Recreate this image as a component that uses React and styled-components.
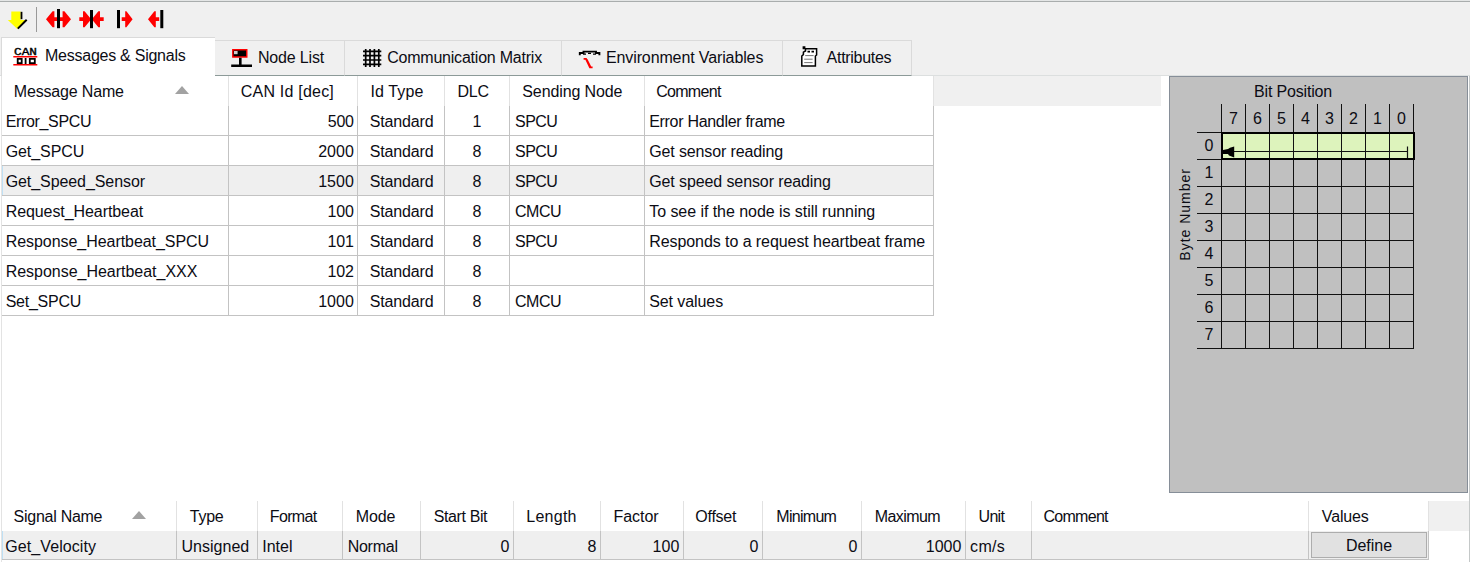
import React from "react";
import styled, { createGlobalStyle } from "styled-components";

const GlobalStyle = createGlobalStyle`
  *, *::before, *::after { box-sizing: border-box; }
  body { margin: 0; background: #fff; overflow: hidden; }
`;

const Window = styled.div`
  display: flex;
  flex-direction: column;
  width: 1470px;
  height: 562px;
  background: #fff;
  color: #0c0c14;
  font: 16px/1 "Liberation Sans", Arial, sans-serif;
  white-space: pre;
  overflow: hidden;
`;

const Label = styled.span`
  letter-spacing: ${(p) => p.$track || 0}px;
`;

/* ---------- toolbar ---------- */

const Toolbar = styled.div`
  display: flex;
  align-items: flex-start;
  flex: none;
  height: 37px;
  border-top: 1px solid #e4e6e6;
  background: #f0f0f0;
  box-shadow: inset 0 1px 0 #a9adad;
`;

const ToolGroup = styled.div`
  display: flex;
  padding: 6px 0 0 ${(p) => p.$left}px;
`;

const Divider = styled.div`
  width: 1px;
  height: 25px;
  margin: 6px 0 0 9px;
  background: #999;
`;

const Svg = styled.svg`
  display: block;
  flex: none;
  overflow: visible;
`;

const ApplyIcon = () => (
  <Svg width="20" height="25" viewBox="7 7 20 25">
    <path fill="#ff0" d="M11.3 11.5H20.6V20H26L17.3 29L7.8 20H11.3Z" />
    <path fill="#000" d="M20.6 11.8H22.4V19.2H20.6Z" />
    <path stroke="#000" strokeWidth="2" d="M17.8 28.6L26.7 19.8" />
  </Svg>
);

const SpreadIcon = () => (
  <Svg width="25" height="25" viewBox="46 7 25 25">
    <path fill="#f00" d="M46 19.2L52.6 11.2H54.4V17.3H62.6V11.2H64.4L71 19.2L64.4 27.3H62.6V21H54.4V27.3H52.6Z" />
    <path fill="#000" d="M57 9H60V28.2H57Z" />
  </Svg>
);

const CollapseIcon = () => (
  <Svg width="25" height="25" viewBox="79 7 25 25">
    <path fill="#f00" d="M79.3 17.3H83V11.2H84.6L91.2 19.2L84.6 27.3H83V21H79.3Z" />
    <path fill="#f00" d="M103.7 17.3H100V11.2H98.4L91.8 19.2L98.4 27.3H100V21H103.7Z" />
    <path fill="#000" d="M90 10H93V28.2H90Z" />
  </Svg>
);

const ExpandRightIcon = () => (
  <Svg width="16" height="25" viewBox="117 7 16 25">
    <path fill="#000" d="M117 10H120V28.2H117Z" />
    <path fill="#f00" d="M121.7 17.3H125.2V11.2H126.4L132.6 19.2L126.4 27.3H125.2V21H121.7Z" />
  </Svg>
);

const ExpandLeftIcon = () => (
  <Svg width="16" height="25" viewBox="148 7 16 25">
    <path fill="#000" d="M160.3 10H163.3V28.2H160.3Z" />
    <path fill="#f00" d="M159.2 17.3H155.8V11.2H154.4L148 19.2L154.4 27.3H155.8V21H159.2Z" />
  </Svg>
);

/* ---------- tabs ---------- */

const TabStrip = styled.div`
  display: flex;
  align-items: flex-end;
  flex: none;
  height: 39px;
  padding-left: 1px;
  background: linear-gradient(#dcdfdf, #dcdfdf) left bottom / 100% 1px no-repeat #f0f0f0;
`;

const Tab = styled.div`
  display: flex;
  align-items: flex-start;
  width: ${(p) => p.$w}px;
  height: ${(p) => (p.$active ? 39 : 36)}px;
  padding-left: ${(p) => p.$pad}px;
  background: ${(p) => (p.$active ? "#fff" : "#f0f0f0")};
  border: solid #dadada;
  border-width: 1px ${(p) => (p.$active ? 0 : 1)}px 0 ${(p) => (p.$active ? 1 : 0)}px;
  border-bottom: ${(p) => (p.$active ? "none" : "1px solid #8c9a98")};
`;

const TabIcon = styled.div`
  display: flex;
  height: 34px;
  align-items: center;
`;

const TabText = styled(Label)`
  margin-left: ${(p) => p.$gap}px;
  line-height: ${(p) => p.$line || 34}px;
`;

const CanText = styled.text`
  font: 10px "Liberation Mono", monospace;
`;

const CanIcon = () => (
  <Svg width="24" height="34" viewBox="13 38 24 34">
    <CanText x="14" y="55" textLength="23" lengthAdjust="spacingAndGlyphs" fill="#000" stroke="#000" strokeWidth=".35">CAN</CanText>
    <path fill="#f00" d="M13.3 56H37.3V57.4H13.3ZM13.3 64H37.3V65.4H13.3Z" />
    <path fill="none" stroke="#000" strokeWidth="1.8" d="M17.7 58.9H21.7V63.1H17.7ZM29.8 58.9H34.8V63.1H29.8ZM25.6 58V64" />
  </Svg>
);

const NodeIcon = () => (
  <Svg width="22" height="34" viewBox="231 41 22 34">
    <path fill="#000" stroke="#f00" strokeWidth="1.4" d="M232.8 49.8H246.8V57H232.8Z" />
    <path fill="#ccc" d="M234 51H237.6V54.2H234Z" />
    <path fill="#000" d="M239 57.8H241.6V65H239ZM231.2 64.4H252V66.9H231.2Z" />
  </Svg>
);

const MatrixIcon = () => (
  <Svg width="19" height="34" viewBox="363 41 19 34">
    <path stroke="#000" strokeWidth="1.7" d="M365.7 49V67M370 49V67M374.4 49V67M378.8 49V67M363 51.3H381.3M363 55.6H381.3M363 60H381.3M363 64.4H381.3" />
  </Svg>
);

const GaugeIcon = () => (
  <Svg width="22" height="34" viewBox="579 41 22 34">
    <path fill="none" stroke="#000" strokeWidth="1.9" d="M579.8 55.2V53H583.5V51.6H596V53H599.4V55.2" />
    <path stroke="#000" strokeWidth="1.2" d="M583 54.2H586M593 54.2H596M588 53.4H591" />
    <path fill="none" stroke="#f00" strokeWidth="1.9" d="M583.6 58.9H586L590 67.4H592.6M586.6 59.5L590.6 67.4" />
  </Svg>
);

const AttributeIcon = () => (
  <Svg width="18" height="34" viewBox="801 41 18 34">
    <path fill="#fff" stroke="#000" strokeWidth="1.5" d="M805.5 51V48.8H816.6V55L815.4 56V66H801.8V56L803.4 54.6V52.2Z" />
    <path fill="#000" d="M802.6 46.3H805.4V49.2H802.6ZM807.5 50.8H810V52.6H807.5ZM811.5 50.8H814V52.6H811.5Z" />
    <path stroke="#777" strokeWidth="1" d="M805.2 55.6H813.6M804.2 59.2H812.6M804.2 62.6H812.6" />
  </Svg>
);

/* ---------- tables ---------- */

const Workspace = styled.div`
  display: flex;
  flex: none;
  height: 425px;
  padding-left: 1px;
  border-right: 1px solid #c4c8c8;
`;

const TablePane = styled.div`
  flex: 1;
  border-left: 1px solid #e3e3e3;
`;

const HeaderRow = styled.div`
  display: flex;
  height: 30px;
`;

const HeaderCell = styled.div`
  display: flex;
  flex: none;
  width: ${(p) => p.$w}px;
  padding: 1px 0 0 ${(p) => p.$pad + 0.8}px;
  line-height: 29px;
  border-right: 1px solid #e2e2e2;
`;

const HeaderFill = styled.div`
  width: ${(p) => p.$w}px;
  background: #f0f0f0;
`;

const SortMark = styled.i`
  width: 0;
  height: 0;
  margin: 9px 0 0 ${(p) => p.$gap}px;
  border: solid transparent;
  border-width: 0 7px 8px;
  border-bottom-color: #a2a2a2;
`;

const Row = styled.div`
  display: flex;
  width: ${(p) => p.$w}px;
  height: ${(p) => p.$h || 30}px;
  background: ${(p) => (p.$active ? "#efefef" : "#fff")};
  box-shadow: ${(p) => (p.$active ? "inset 1px 0 0 #bfe0f4" : "none")};
`;

const Cell = styled.div`
  flex: none;
  width: ${(p) => p.$w}px;
  padding: 1px ${(p) => (p.$align === "right" ? p.$pad + 0.7 : 0)}px 0
    ${(p) => (p.$align ? 0 : p.$pad + 0.7)}px;
  line-height: 29px;
  text-align: ${(p) => p.$align || "left"};
  border: solid #c3c3c3;
  border-width: 0 1px 1px 0;
`;

const ActionCell = styled(Cell)`
  padding: 1px 0 0 2px;
`;

const DefineButton = styled.button`
  display: block;
  width: 116px;
  height: 26px;
  margin: 0;
  padding: 0;
  border: 1px solid #adadad;
  background: #e1e1e1;
  color: inherit;
  font: inherit;
  line-height: 23px;
  text-align: center;
`;

/* ---------- bit layout panel ---------- */

const Panel = styled.div`
  flex: none;
  width: 299px;
  height: 417px;
  margin-right: 1px;
  border: 1px solid #868e98;
  background: #c0c0c0;
`;

const PanelTitle = styled.div`
  height: 27px;
  padding: 1px 0 0 84px;
  line-height: 27px;
`;

const PanelBody = styled.div`
  display: flex;
`;

const AxisName = styled.div`
  width: 27px;
  padding: 64px 0 0 6px;
  font-size: 14px;
  line-height: 18px;
  letter-spacing: 1px;
  writing-mode: sideways-lr;
  text-align: right;
`;

const BitTable = styled.div`
  position: relative;
  display: grid;
  grid-template-columns: 25px repeat(8, 24px);
  grid-template-rows: 29px repeat(8, 27px);
`;

const BitCell = styled.div`
  border: solid #111;
  border-width: 0 1px 1px 0;
  background: ${(p) => (p.$used ? "#ddf3bc" : "transparent")};
  text-align: center;
  line-height: ${(p) => (p.$head ? 29 : 26)}px;
`;

const SignalFrame = styled.div`
  position: absolute;
  left: 24px;
  top: 28px;
  width: 194px;
  height: 28px;
  border: 2px solid #000;
`;

const SignalArrow = () => (
  <Svg width="190" height="24" viewBox="1223 134 190 24">
    <path stroke="#111" strokeWidth="1.2" d="M1224 151.5H1407.5M1407.5 146.5V158" />
    <path fill="#000" d="M1223 150L1228 149L1230 147.8L1234.2 146.4V157.6L1229 155.5L1228 154H1223Z" />
  </Svg>
);

/* ---------- data ---------- */

const messageColumns = [
  { title: "Message Name", w: 227, head: 11, pad: 3, track: -0.17, sort: 51 },
  { title: "CAN Id [dec]", w: 129, head: 11, pad: 2.5, align: "right", track: 0.21 },
  { title: "Id Type", w: 87, head: 11.7, pad: 11, track: 0.12 },
  { title: "DLC", w: 65, head: 11.7, align: "center", track: -0.23 },
  { title: "Sending Node", w: 135, head: 11.5, pad: 4.3, track: -0.11 },
  { title: "Comment", w: 289, head: 10.4, pad: 3.5, track: -0.7 },
];

const messages = [
  [["Error_SPCU", -0.34], ["500", -0.2], ["Standard", -0.15], ["1"], ["SPCU", -0.53], ["Error Handler frame", -0.3]],
  [["Get_SPCU", -0.08], ["2000"], ["Standard", -0.15], ["8"], ["SPCU", -0.53], ["Get sensor reading", -0.13]],
  [["Get_Speed_Sensor", -0.08], ["1500"], ["Standard", -0.15], ["8"], ["SPCU", -0.53], ["Get speed sensor reading", -0.1]],
  [["Request_Heartbeat", -0.08], ["100", -0.1], ["Standard", -0.15], ["8"], ["CMCU", -0.48], ["To see if the node is still running", -0.05]],
  [["Response_Heartbeat_SPCU", -0.05], ["101", -0.1], ["Standard", -0.15], ["8"], ["SPCU", -0.53], ["Responds to a request heartbeat frame", -0.07]],
  [["Response_Heartbeat_XXX", -0.02], ["102", -0.1], ["Standard", -0.15], ["8"], [""], [""]],
  [["Set_SPCU", -0.26], ["1000"], ["Standard", -0.15], ["8"], ["CMCU", -0.48], ["Set values", -0.08]],
];

const signalColumns = [
  { title: "Signal Name", w: 175, head: 10.8, pad: 2.6, track: -0.27, sort: 30 },
  { title: "Type", w: 81, head: 12, pad: 3.7, track: -0.26 },
  { title: "Format", w: 85, head: 11, pad: 3.5, track: -0.65 },
  { title: "Mode", w: 78, head: 12, pad: 4, track: -0.14 },
  { title: "Start Bit", w: 93, head: 12, pad: 2.8, align: "right", track: -0.4 },
  { title: "Length", w: 87, head: 11.5, pad: 3, align: "right", track: 0.25 },
  { title: "Factor", w: 83, head: 11.7, pad: 3, align: "right", track: -0.06 },
  { title: "Offset", w: 79, head: 10.5, pad: 2.8, align: "right", track: -0.25 },
  { title: "Minimum", w: 99, head: 12.5, pad: 2.8, align: "right", track: -0.71 },
  { title: "Maximum", w: 104, head: 12, pad: 2.9, align: "right", track: -0.6 },
  { title: "Unit", w: 66, head: 11.7, pad: 3.4, track: -0.67 },
  { title: "Comment", w: 277, head: 10.6, pad: 3, track: -0.7 },
  { title: "Values", w: 120, head: 12, pad: 2, track: -0.15 },
];

const signal = [
  ["Get_Velocity", 0.08], ["Unsigned", 0.04], ["Intel"], ["Normal", -0.26], ["0"], ["8"],
  ["100"], ["0"], ["0"], ["1000"], ["cm/s", 0.3], [""],
];

const Header = ({ columns, fill }) => (
  <HeaderRow>
    {columns.map((c) => (
      <HeaderCell key={c.title} $w={c.w} $pad={c.head}>
        <Label $track={c.track}>{c.title}</Label>
        {c.sort && <SortMark $gap={c.sort} />}
      </HeaderCell>
    ))}
    <HeaderFill $w={fill} />
  </HeaderRow>
);

const Cells = ({ columns, values }) =>
  values.map(([text, track], i) => (
    <Cell key={i} $w={columns[i].w} $pad={columns[i].pad} $align={columns[i].align}>
      <Label $track={track}>{text}</Label>
    </Cell>
  ));

const bits = [7, 6, 5, 4, 3, 2, 1, 0];
const bytes = [0, 1, 2, 3, 4, 5, 6, 7];

export default function App() {
  return (
    <Window>
      <GlobalStyle />
      <Toolbar>
        <ToolGroup $left={7}><ApplyIcon /></ToolGroup>
        <Divider />
        <ToolGroup $left={9}><SpreadIcon /></ToolGroup>
        <ToolGroup $left={8}><CollapseIcon /></ToolGroup>
        <ToolGroup $left={13}><ExpandRightIcon /></ToolGroup>
        <ToolGroup $left={15}><ExpandLeftIcon /></ToolGroup>
      </Toolbar>

      <TabStrip>
        <Tab $active $w={214} $pad={11}>
          <TabIcon><CanIcon /></TabIcon>
          <TabText $gap={8} $line={36} $track={-0.25}>Messages &amp; Signals</TabText>
        </Tab>
        <Tab $w={130} $pad={16}>
          <TabIcon><NodeIcon /></TabIcon>
          <TabText $gap={5} $track={-0.18}>Node List</TabText>
        </Tab>
        <Tab $w={217} $pad={18}>
          <TabIcon><MatrixIcon /></TabIcon>
          <TabText $gap={5.2} $track={-0.22}>Communication Matrix</TabText>
        </Tab>
        <Tab $w={221} $pad={17}>
          <TabIcon><GaugeIcon /></TabIcon>
          <TabText $gap={5} $track={-0.12}>Environment Variables</TabText>
        </Tab>
        <Tab $w={129} $pad={18}>
          <TabIcon><AttributeIcon /></TabIcon>
          <TabText $gap={7.6} $track={-0.29}>Attributes</TabText>
        </Tab>
      </TabStrip>

      <Workspace>
        <TablePane>
          <Header columns={messageColumns} fill={227} />
          {messages.map((m, i) => (
            <Row key={i} $w={932} $active={i === 2}>
              <Cells columns={messageColumns} values={m} />
            </Row>
          ))}
        </TablePane>
        <Panel>
          <PanelTitle><Label $track={-0.17}>Bit Position</Label></PanelTitle>
          <PanelBody>
            <AxisName>Byte Number</AxisName>
            <BitTable>
              <BitCell $head />
              {bits.map((b) => <BitCell key={b} $head>{b}</BitCell>)}
              {bytes.map((y) => (
                <React.Fragment key={y}>
                  <BitCell>{y}</BitCell>
                  {bits.map((b) => <BitCell key={b} $used={y === 0} />)}
                </React.Fragment>
              ))}
              <SignalFrame><SignalArrow /></SignalFrame>
            </BitTable>
          </PanelBody>
        </Panel>
      </Workspace>

      <Workspace>
        <TablePane>
          <Header columns={signalColumns} fill={40} />
          <Row $w={1427} $h={29} $active>
            <Cells columns={signalColumns} values={signal} />
            <ActionCell $w={120} $pad={2}>
              <DefineButton>Define</DefineButton>
            </ActionCell>
          </Row>
        </TablePane>
      </Workspace>
    </Window>
  );
}
